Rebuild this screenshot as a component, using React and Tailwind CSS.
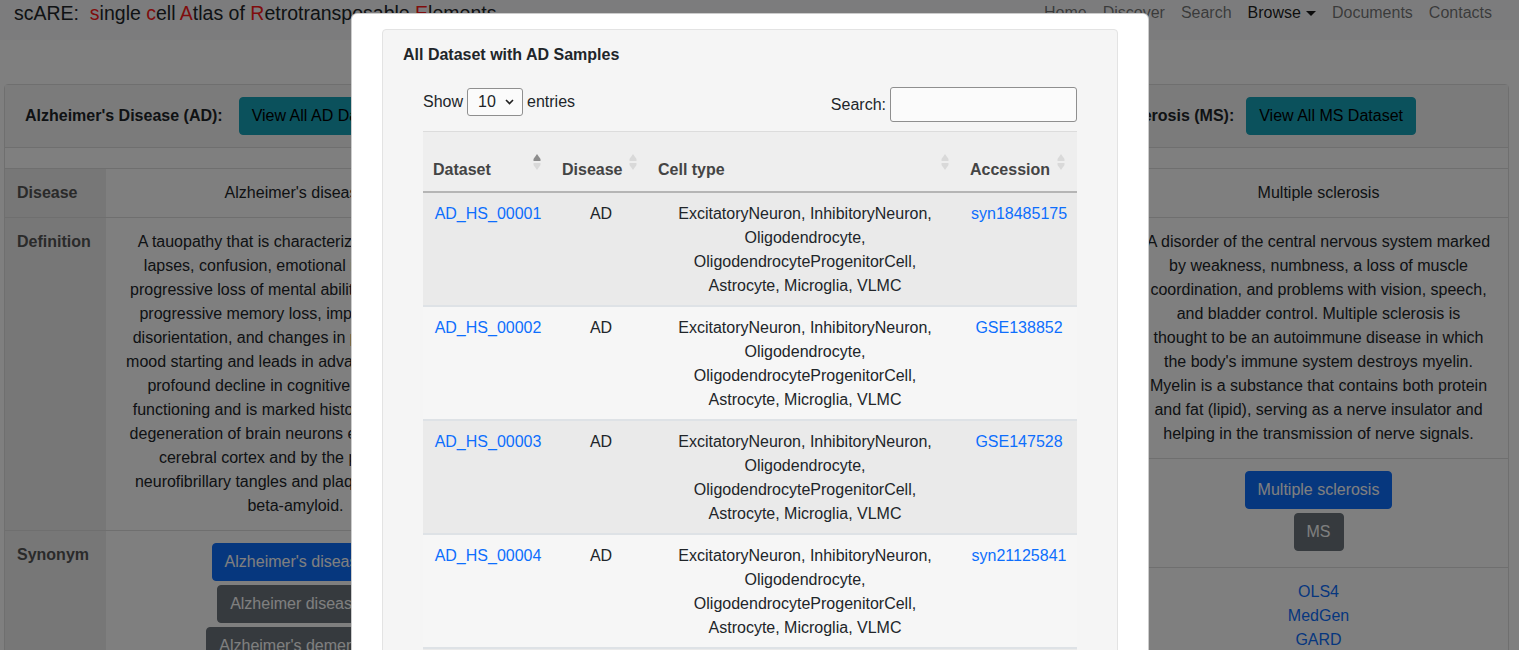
import React from "react";

const adDefinition = [
  "A tauopathy that is characterized by memory",
  "lapses, confusion, emotional instability and",
  "progressive loss of mental ability that results in",
  "progressive memory loss, impaired thinking,",
  "disorientation, and changes in personality and",
  "mood starting and leads in advanced cases to a",
  "profound decline in cognitive and physical",
  "functioning and is marked histologically by the",
  "degeneration of brain neurons especially in the",
  "cerebral cortex and by the presence of",
  "neurofibrillary tangles and plaques containing",
  "beta-amyloid.",
];

const msDefinition = [
  "A disorder of the central nervous system marked",
  "by weakness, numbness, a loss of muscle",
  "coordination, and problems with vision, speech,",
  "and bladder control. Multiple sclerosis is",
  "thought to be an autoimmune disease in which",
  "the body's immune system destroys myelin.",
  "Myelin is a substance that contains both protein",
  "and fat (lipid), serving as a nerve insulator and",
  "helping in the transmission of nerve signals.",
];

const rows = [
  { id: "AD_HS_00001", acc: "syn18485175" },
  { id: "AD_HS_00002", acc: "GSE138852" },
  { id: "AD_HS_00003", acc: "GSE147528" },
  { id: "AD_HS_00004", acc: "syn21125841" },
  { id: "AD_HS_00005", acc: "GSE157827" },
];

const cellLines = [
  "ExcitatoryNeuron, InhibitoryNeuron,",
  "Oligodendrocyte,",
  "OligodendrocyteProgenitorCell,",
  "Astrocyte, Microglia, VLMC",
];

function Lines({ lines }) {
  return (
    <div className="flex flex-col items-center">
      {lines.map((l, i) => (
        <div key={i} className="whitespace-nowrap leading-6">
          {l}
        </div>
      ))}
    </div>
  );
}

function SortIcon({ active }) {
  return (
    <svg
      width="8"
      height="17"
      viewBox="0 0 8 17"
      className="absolute right-[12px] top-1/2 -translate-y-1/2"
    >
      <path d="M4 0.5 L7.5 5.5 L7.5 7.5 L0.5 7.5 L0.5 5.5 Z" fill={active ? "#8c8c8c" : "#d9d9d9"} />
      <path d="M0.5 9.5 L7.5 9.5 L7.5 11.5 L4 16.5 L0.5 11.5 Z" fill="#d9d9d9" />
    </svg>
  );
}

function Btn({ children, kind }) {
  const cls =
    kind === "primary"
      ? "bg-[#0d6efd] border-[#0d6efd] text-white"
      : kind === "info"
      ? "bg-[#17a2b8] border-[#17a2b8] text-[#000]"
      : "bg-[#6c757d] border-[#6c757d] text-white";
  return (
    <span className={`inline-block border rounded-[4px] px-3 py-[6px] leading-6 text-[16px] whitespace-nowrap ${cls}`}>
      {children}
    </span>
  );
}

export default function App() {
  return (
    <div className="relative min-h-screen bg-white text-[16px] text-[#212529] font-['Liberation_Sans',Arial,sans-serif] overflow-hidden">
      {/* Navbar */}
      <nav className="h-[40px] bg-[#f8f9fa] flex items-start justify-between pt-[1px] pl-[14px] pr-[19px]">
        <div className="text-[19.5px] leading-6 whitespace-nowrap">
          scARE:{"\u00a0 "}
          <span className="text-[#ff1a1a]">s</span>ingle <span className="text-[#ff1a1a]">c</span>ell{" "}
          <span className="text-[#ff1a1a]">A</span>tlas of <span className="text-[#ff1a1a]">R</span>etrotransposable{" "}
          <span className="text-[#ff1a1a]">E</span>lements
        </div>
        <div className="flex items-start leading-6">
          <span className="px-2 text-black/55">Home</span>
          <span className="px-2 text-black/55">Discover</span>
          <span className="px-2 text-black/55">Search</span>
          <span className="px-2 text-black/90 flex items-center">
            Browse
            <span className="ml-[5px] w-0 h-0 border-l-[5px] border-r-[5px] border-t-[5px] border-l-transparent border-r-transparent border-t-black/90" />
          </span>
          <span className="px-2 text-black/55">Documents</span>
          <span className="px-2 text-black/55">Contacts</span>
        </div>
      </nav>

      {/* Main content */}
      <main className="pt-[44px] pl-[4px] pr-[10px]">
        <div className="border border-[#dfdfdf] rounded-[4px]">
          <div className="flex items-center px-5 py-3 bg-[#f7f7f7] border-b border-[#dfdfdf]">
            <span className="font-bold">Alzheimer's Disease (AD):</span>
            <span className="ml-4">
              <Btn kind="info">View All AD Dataset</Btn>
            </span>
            <div className="ml-auto mr-[72px] flex items-center">
              <span className="font-bold">Multiple Sclerosis (MS):</span>
              <span className="ml-3">
                <Btn kind="info">View All MS Dataset</Btn>
              </span>
            </div>
          </div>
          <div className="h-[21px] border-b border-[#dfdfdf]" />
          <div className="flex items-start">
            {/* AD block */}
            <div className="grid grid-cols-[101px_379px]">
              <div className="bg-[#eeeeee] font-bold text-[#555] px-3 py-3 leading-6 border-b border-[#dfdfdf]">Disease</div>
              <div className="text-center px-3 py-3 leading-6 border-b border-[#dfdfdf]">Alzheimer's disease</div>
              <div className="bg-[#eeeeee] font-bold text-[#555] px-3 py-3 leading-6 border-b border-[#dfdfdf]">Definition</div>
              <div className="px-3 py-3 border-b border-[#dfdfdf]">
                <Lines lines={adDefinition} />
              </div>
              <div className="bg-[#eeeeee] font-bold text-[#555] px-3 py-3 leading-6 border-b border-[#dfdfdf]">Synonym</div>
              <div className="px-3 pt-3 pb-3 border-b border-[#dfdfdf] flex flex-col items-center">
                <div className="mb-1"><Btn kind="primary">Alzheimer's disease</Btn></div>
                <div className="mb-1"><Btn kind="secondary">Alzheimer disease</Btn></div>
                <div className="mb-1"><Btn kind="secondary">Alzheimer's dementia</Btn></div>
                <div className="mb-1"><Btn kind="secondary">AD</Btn></div>
              </div>
            </div>
            {/* Middle block (hidden under modal) */}
            <div className="w-[644px]">
              <div className="text-center px-3 py-3 leading-6 border-b border-[#dfdfdf]">&nbsp;</div>
            </div>
            {/* MS block */}
            <div className="flex-1">
              <div className="text-center px-3 py-3 leading-6 border-b border-[#dfdfdf]">Multiple sclerosis</div>
              <div className="px-3 py-3 border-b border-[#dfdfdf]">
                <Lines lines={msDefinition} />
              </div>
              <div className="px-3 pt-3 pb-3 border-b border-[#dfdfdf] flex flex-col items-center">
                <div className="mb-1"><Btn kind="primary">Multiple sclerosis</Btn></div>
                <div className="mb-1"><Btn kind="secondary">MS</Btn></div>
              </div>
              <div className="px-3 py-3 border-b border-[#dfdfdf] flex flex-col items-center leading-6 text-[#0d6efd]">
                <span>OLS4</span>
                <span>MedGen</span>
                <span>GARD</span>
              </div>
            </div>
          </div>
        </div>
      </main>

      {/* Modal overlay */}
      <div className="fixed inset-0 bg-black/50 overflow-hidden">
        <div className="ml-[351px] mt-[13px] w-[798px] bg-white border border-black/20 rounded-[6px] px-[30px] pt-[15px] pb-4">
          <div className="bg-[#f5f5f5] border border-[#e3e3e3] rounded-[4px] px-5 pt-[13px] pb-5">
            <div className="font-bold leading-6">
              All Dataset with AD Samples
            </div>
            <div className="mt-5 px-5">
              <div className="flex justify-between items-start">
                <div className="flex items-center pt-[1px]">
                  <span>Show</span>
                  <span className="ml-1 w-[56px] h-[28px] border border-[#8f8f8f] rounded-[3px] bg-[#fbfbfb] flex items-center justify-between pl-[10px] pr-[8px]">
                    <span>10</span>
                    <svg width="9" height="6" viewBox="0 0 9 6">
                      <path d="M1 1 L4.5 4.5 L8 1" stroke="#222" strokeWidth="1.6" fill="none" />
                    </svg>
                  </span>
                  <span className="ml-1">entries</span>
                </div>
                <div className="flex items-center">
                  <span className="mr-1">Search:</span>
                  <span className="w-[187px] h-[35px] border border-[#8f8f8f] rounded-[3px] bg-[#fbfbfb]" />
                </div>
              </div>

              <div className="mt-[9px] border-t border-[#dcdcdc]">
                <div className="grid grid-cols-[130px_96px_312px_116px] h-[59px] bg-[#eeeeee] border-b-2 border-[#b5b5b5] box-content font-bold text-[#444]">
                  <div className="relative flex items-end pb-[9px] pl-[10px] leading-6">
                    Dataset
                    <SortIcon active />
                  </div>
                  <div className="relative flex items-end pb-[9px] pl-[9px] leading-6">
                    Disease
                    <SortIcon />
                  </div>
                  <div className="relative flex items-end pb-[9px] pl-[9px] leading-6">
                    Cell type
                    <SortIcon />
                  </div>
                  <div className="relative flex items-end pb-[9px] pl-[9px] leading-6">
                    Accession
                    <SortIcon />
                  </div>
                </div>
                {rows.map((r, i) => (
                  <div
                    key={r.id}
                    className={`grid grid-cols-[130px_96px_312px_116px] border-b-2 border-[#dee2e6] pt-[9px] pb-[7px] text-center leading-6 ${
                      i % 2 === 0 ? "bg-[#eaeaea]" : "bg-[#f6f6f6]"
                    }`}
                  >
                    <div className="px-[10px] text-[#0d6efd]">{r.id}</div>
                    <div className="px-[10px]">AD</div>
                    <div className="px-[10px]">
                      <Lines lines={cellLines} />
                    </div>
                    <div className="px-[10px] text-[#0d6efd]">{r.acc}</div>
                  </div>
                ))}
              </div>
            </div>
          </div>
        </div>
      </div>
    </div>
  );
}
